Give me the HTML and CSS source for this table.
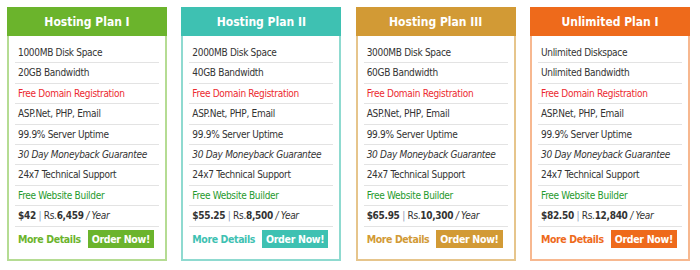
FILE: index.html
```html
<!DOCTYPE html>
<html>
<head>
<meta charset="utf-8">
<link rel="stylesheet" href="styles.css">
</head>
<body>
<div class="plans">
  <div class="card green">
    <div class="head">Hosting Plan I</div>
    <ul class="feat">
      <li>1000MB Disk Space</li>
      <li>20GB Bandwidth</li>
      <li class="red">Free Domain Registration</li>
      <li>ASP.Net, PHP, Email</li>
      <li>99.9% Server Uptime</li>
      <li class="it">30 Day Moneyback Guarantee</li>
      <li>24x7 Technical Support</li>
      <li class="grn">Free Website Builder</li>
      <li class="price"><b>$42</b> <span class="sep">|</span> Rs.<b>6,459</b> <i>/ Year</i></li>
    </ul>
    <div class="actions"><a class="more">More Details</a><a class="order">Order Now!</a></div>
  </div>
  <div class="card teal">
    <div class="head">Hosting Plan II</div>
    <ul class="feat">
      <li>2000MB Disk Space</li>
      <li>40GB Bandwidth</li>
      <li class="red">Free Domain Registration</li>
      <li>ASP.Net, PHP, Email</li>
      <li>99.9% Server Uptime</li>
      <li class="it">30 Day Moneyback Guarantee</li>
      <li>24x7 Technical Support</li>
      <li class="grn">Free Website Builder</li>
      <li class="price"><b>$55.25</b> <span class="sep">|</span> Rs.<b>8,500</b> <i>/ Year</i></li>
    </ul>
    <div class="actions"><a class="more">More Details</a><a class="order">Order Now!</a></div>
  </div>
  <div class="card gold">
    <div class="head">Hosting Plan III</div>
    <ul class="feat">
      <li>3000MB Disk Space</li>
      <li>60GB Bandwidth</li>
      <li class="red">Free Domain Registration</li>
      <li>ASP.Net, PHP, Email</li>
      <li>99.9% Server Uptime</li>
      <li class="it">30 Day Moneyback Guarantee</li>
      <li>24x7 Technical Support</li>
      <li class="grn">Free Website Builder</li>
      <li class="price"><b>$65.95</b> <span class="sep">|</span> Rs.<b>10,300</b> <i>/ Year</i></li>
    </ul>
    <div class="actions"><a class="more">More Details</a><a class="order">Order Now!</a></div>
  </div>
  <div class="card orange">
    <div class="head">Unlimited Plan I</div>
    <ul class="feat">
      <li>Unlimited Diskspace</li>
      <li>Unlimited Bandwidth</li>
      <li class="red">Free Domain Registration</li>
      <li>ASP.Net, PHP, Email</li>
      <li>99.9% Server Uptime</li>
      <li class="it">30 Day Moneyback Guarantee</li>
      <li>24x7 Technical Support</li>
      <li class="grn">Free Website Builder</li>
      <li class="price"><b>$82.50</b> <span class="sep">|</span> Rs.<b>12,840</b> <i>/ Year</i></li>
    </ul>
    <div class="actions"><a class="more">More Details</a><a class="order">Order Now!</a></div>
  </div>
</div>
</body>
</html>
```
FILE: styles.css
```css
html, body { margin: 0; padding: 0; background: #fff; }
body {
  font-family: "DejaVu Sans Condensed", "DejaVu Sans", sans-serif;
  font-size: 10px;
  letter-spacing: -0.3px;
  color: #333;
}
.plans {
  display: flex;
  gap: 14.33px;
  padding: 7px 0 0 7px;
}
.card {
  flex: 0 0 160px;
  min-width: 0;
  border: 2px solid #b3db8f;
  border-top: 0;
  height: 254px;
  box-sizing: border-box;
  display: flex;
  flex-direction: column;
}
.head {
  flex: 0 0 29px;
  margin: 0 -2px;
  color: #fff;
  font-weight: bold;
  font-size: 12px;
  letter-spacing: 0;
  display: flex;
  align-items: center;
  justify-content: center;
}
.feat {
  flex: 0 0 auto;
  list-style: none;
  margin: 7px 6px 0 6px;
  padding: 0;
}
.feat li {
  height: 19.4px;
  line-height: 19.4px;
  padding-left: 3px;
  border-bottom: 1px solid #e3e3e3;
  white-space: nowrap;
}
.feat li.red { color: #ec2a30; }
.feat li.grn { color: #1f9a2e; }
.feat li.it { font-style: italic; }
.price b { color: #333; }
.price .sep { color: #8a99b8; }
.actions {
  flex: 0 0 auto;
  display: flex;
  align-items: center;
  padding: 3px 0 0 9px;
  gap: 7px;
  white-space: nowrap;
}
.more { font-weight: bold; font-size: 10.5px; letter-spacing: -0.4px; }
.order {
  font-weight: bold;
  font-size: 10.5px;
  letter-spacing: -0.3px;
  color: #fff;
  height: 18px;
  line-height: 18px;
  padding: 0 4px;
}
.green { border-color: #b5dc93; }
.green .head, .green .order { background: #6bb42c; }
.green .more { color: #6bb42c; }
.teal { border-color: #8fdad0; }
.teal .head, .teal .order { background: #3ec1b2; }
.teal .more { color: #3ec1b2; }
.gold { border-color: #e6c58c; }
.gold .head, .gold .order { background: #d29a35; }
.gold .more { color: #d29a35; }
.orange { border-color: #f7b890; }
.orange .head, .orange .order { background: #ee6a1b; }
.orange .more { color: #ee6a1b; }
```
